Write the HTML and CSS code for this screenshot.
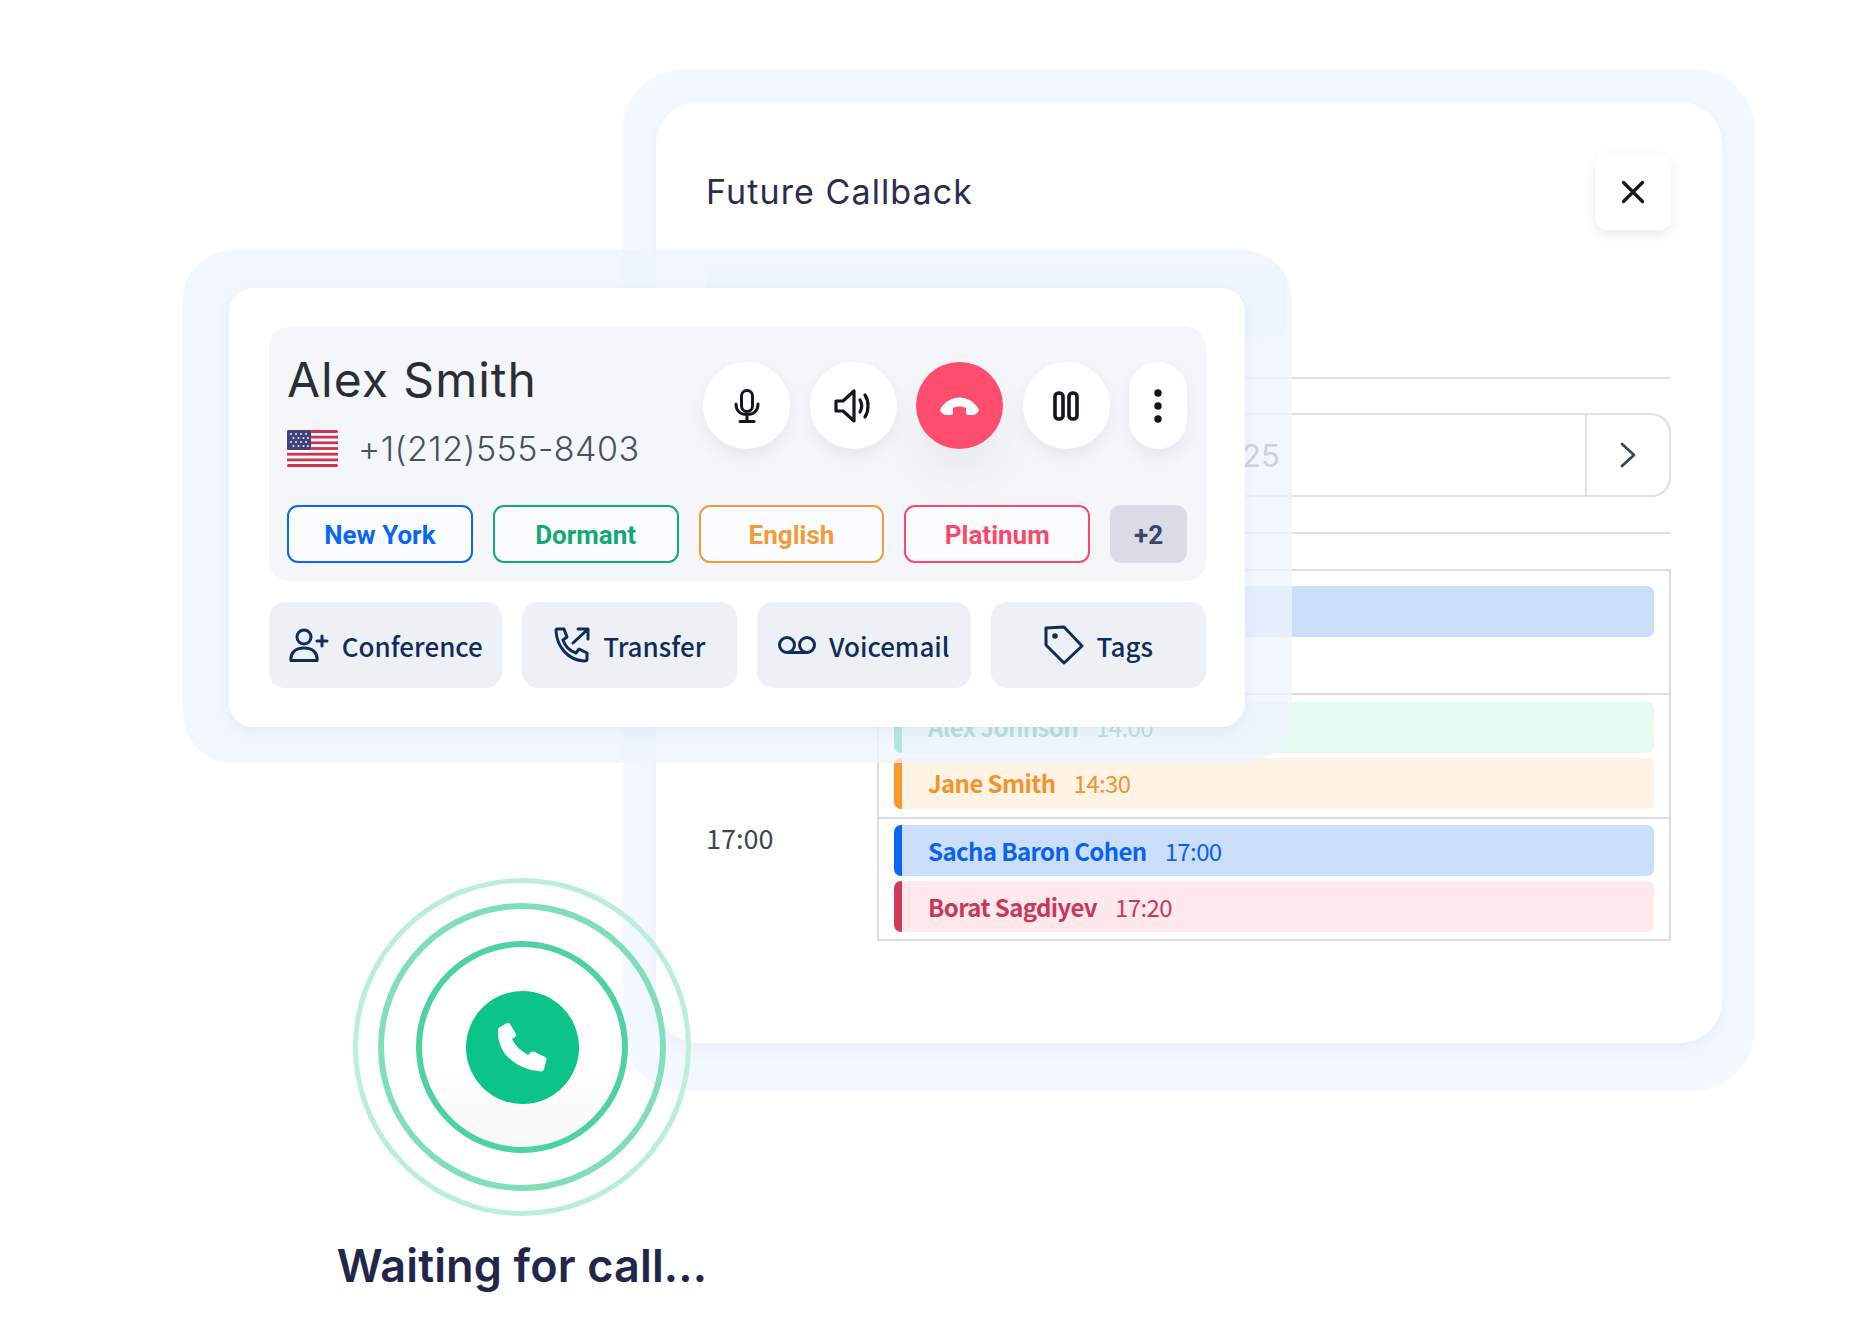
FILE: index.html
```html
<!DOCTYPE html>
<html lang="en">
<head>
    <meta charset="UTF-8">
    <meta name="viewport" content="width=device-width, initial-scale=1.0">
    <title>Call Panel</title>
    <link rel="stylesheet" href="styles.css">
</head>
<body>
    <div class="stage">

        <!-- back window: callback calendar -->
        <div class="halo back-halo">
            <div class="back-card">
                <div class="back-head">
                    <h2 class="back-title">Future Callback</h2>
                    <button class="close-btn">
                        <svg width="24" height="24" viewBox="0 0 24 24" fill="none" stroke="#14161c" stroke-width="3.2" stroke-linecap="round"><path d="M2.500 2.500l19 19M21.500 2.500l-19 19"/></svg>
                    </button>
                </div>
                <div class="tabs-ghost"></div>
                <hr class="rule rule-first">
                <div class="date-bar">
                    <div class="date-text">25</div>
                    <div class="date-next">
                        <svg width="18" height="28" viewBox="0 0 18 28" fill="none" stroke="#3f4755" stroke-width="2.8" stroke-linecap="round" stroke-linejoin="round"><path d="M3 3l12 11L3 25"/></svg>
                    </div>
                </div>
                <hr class="rule rule-second">
                <div class="cal">
                    <div class="cal-time"></div>
                    <div class="cal-slot slot-a">
                        <div class="event ev-blue"></div>
                    </div>
                    <div class="cal-time"></div>
                    <div class="cal-slot slot-b">
                        <div class="event ev-green"><b>Alex Johnson</b><span>14:00</span></div>
                        <div class="event ev-orange"><b>Jane Smith</b><span>14:30</span></div>
                    </div>
                    <div class="cal-time">17:00</div>
                    <div class="cal-slot slot-c">
                        <div class="event ev-blue"><b>Sacha Baron Cohen</b><span>17:00</span></div>
                        <div class="event ev-red"><b>Borat Sagdiyev</b><span>17:20</span></div>
                    </div>
                </div>
            </div>
        </div>

        <!-- waiting rings -->
        <div class="waiting">
            <div class="ring ring-3">
                <div class="ring ring-2">
                    <div class="ring ring-1">
                        <div class="call-dot">
                            <svg width="50" height="50" viewBox="0 0 50 50" fill="#fff"><path d="M3 5L10 1Q12 0 13 2L19 12Q20 14 18 15L15 17Q19 26 31 33L34 30Q36 29 38 30L48 35Q50 36 49.500 38L47 47Q46.500 49.500 44 49.500Q22 48 8 32Q0 20 1 8Q1 6 3 5Z"/></svg>
                        </div>
                    </div>
                </div>
            </div>
            <div class="waiting-text">Waiting for call...</div>
        </div>

        <!-- front window: active call -->
        <div class="halo front-halo">
            <div class="front-card">
                <div class="call-box">
                    <div class="call-top">
                        <div class="caller">
                            <div class="caller-name">Alex Smith</div>
                            <div class="caller-phone">
                                <svg class="flag" width="51" height="37" viewBox="0 0 51 37">
                                    <rect width="51" height="37" rx="3" fill="#fff"/>
                                    <g fill="#d0334f">
                                        <rect width="51" height="3" rx="1.500"/>
                                        <rect y="5.700" width="51" height="2.800"/>
                                        <rect y="11.400" width="51" height="2.800"/>
                                        <rect y="17.100" width="51" height="2.800"/>
                                        <rect y="22.800" width="51" height="2.800"/>
                                        <rect y="28.500" width="51" height="2.800"/>
                                        <rect y="34" width="51" height="3" rx="1.500"/>
                                    </g>
                                    <rect width="24" height="20" rx="2" fill="#3f4379"/>
                                    <g fill="#dfe2f2">
                                        <circle cx="4" cy="4" r="1.100"/><circle cx="9" cy="4" r="1.100"/><circle cx="14" cy="4" r="1.100"/><circle cx="19" cy="4" r="1.100"/>
                                        <circle cx="6.500" cy="8" r="1.100"/><circle cx="11.500" cy="8" r="1.100"/><circle cx="16.500" cy="8" r="1.100"/><circle cx="21" cy="8" r="1.100"/>
                                        <circle cx="4" cy="12" r="1.100"/><circle cx="9" cy="12" r="1.100"/><circle cx="14" cy="12" r="1.100"/><circle cx="19" cy="12" r="1.100"/>
                                        <circle cx="6.500" cy="16" r="1.100"/><circle cx="11.500" cy="16" r="1.100"/><circle cx="16.500" cy="16" r="1.100"/><circle cx="21" cy="16" r="1.100"/>
                                    </g>
                                </svg>
                                <span>+1(212)555-8403</span>
                            </div>
                        </div>
                        <div class="controls">
                            <button class="ctl">
                                <svg width="26" height="34" viewBox="0 0 26 34" fill="none" stroke="#14161c" stroke-width="3" stroke-linecap="round"><rect x="7.500" y="1.500" width="11" height="21" rx="5.500"/><path d="M2 15c0 7 4.500 10.500 11 10.500S24 22 24 15M13 26v6M6 32.500h14"/></svg>
                            </button>
                            <button class="ctl">
                                <svg width="38" height="34" viewBox="0 0 38 34" fill="none" stroke="#14161c" stroke-width="3.200" stroke-linecap="round" stroke-linejoin="round"><path d="M2 12h7L20 2v30L9 22H2z"/><path d="M26 11c2 3.500 2 8.500 0 12M31 6c4 6 4 16 0 22"/></svg>
                            </button>
                            <button class="ctl ctl-end">
                                <svg width="39" height="18" viewBox="0 0 39 18" fill="#fff"><path d="M1 11C10-3 29-3 38 11Q39.500 13 38 15L36 17Q35 18 33 18L28 18Q26 18 26 16L26 11C22 9 17 9 13 11L13 16Q13 18 11 18L6 18Q4 18 3 17L1 15Q-.5 13 1 11Z"/></svg>
                            </button>
                            <button class="ctl">
                                <svg width="26" height="30" viewBox="0 0 26 30" fill="none" stroke="#14161c" stroke-width="3.600"><rect x="2" y="2" width="8" height="26" rx="3.500"/><rect x="16" y="2" width="8" height="26" rx="3.500"/></svg>
                            </button>
                            <button class="ctl ctl-more">
                                <svg width="8" height="34" viewBox="0 0 8 34" fill="#14161c"><circle cx="4" cy="4" r="3.700"/><circle cx="4" cy="17" r="3.700"/><circle cx="4" cy="30" r="3.700"/></svg>
                            </button>
                        </div>
                    </div>
                    <div class="pills">
                        <div class="pill pill-blue">New York</div>
                        <div class="pill pill-green">Dormant</div>
                        <div class="pill pill-orange">English</div>
                        <div class="pill pill-pink">Platinum</div>
                        <div class="pill pill-more">+2</div>
                    </div>
                </div>
                <div class="actions">
                    <button class="action act-conf">
                        <svg width="40" height="34" viewBox="0 0 40 34" fill="none" stroke="#0f2c5a" stroke-width="3" stroke-linecap="round" stroke-linejoin="round"><circle cx="15" cy="9" r="7"/><path d="M2 32.500c-1-7 4-12.500 13-12.500s14 5.500 13 12.500zM33 8v10M28 13h10"/></svg>
                        Conference
                    </button>
                    <button class="action act-transfer">
                        <svg width="36" height="36" viewBox="0 0 36 36" fill="none" stroke="#0f2c5a" stroke-width="3" stroke-linecap="round" stroke-linejoin="round"><path d="M3 2L10 2 13 10 9 13C11 19 16 24 22 26L25 22 33 26 33 32Q33 34 30 34C14 33 3 20 2 4Q2 2 3 2ZM19 16L33 3M24 2L34 2 34 12"/></svg>
                        Transfer
                    </button>
                    <button class="action act-voice">
                        <svg width="38" height="18" viewBox="0 0 38 18" fill="none" stroke="#0f2c5a" stroke-width="3"><circle cx="9" cy="9" r="7.500"/><circle cx="29" cy="9" r="7.500"/><path d="M9 16.500h20"/></svg>
                        Voicemail
                    </button>
                    <button class="action act-tags">
                        <svg width="40" height="40" viewBox="0 0 40 40" fill="none" stroke="#0f2c5a" stroke-width="3" stroke-linejoin="round"><path d="M2 3L20 2 38 21 20 38 2 20Z"/><circle cx="11" cy="11" r="2.800" fill="#0f2c5a" stroke="none"/></svg>
                        Tags
                    </button>
                </div>
            </div>
        </div>

    </div>
</body>
</html>
```

FILE: styles.css
```css
* { box-sizing: border-box; }
body { margin: 0; background: #fff; font-family: "Inter", sans-serif; }
button { font: inherit; border: none; cursor: pointer; padding: 0; }
svg { display: block; flex: none; }

.stage { position: relative; width: 1850px; height: 1337px; overflow: hidden; }

.halo { position: absolute; }

/* back window */
.back-halo { left: 623px; top: 70px; width: 1131px; height: 1020px; padding: 32px 32px 47px 33px; background: #f3f7fe; border-radius: 60px; box-shadow: 0 0 4px #f3f7fe; }
.back-card { height: 941px; padding: 51px 51px 0 50px; background: #fff; border-radius: 42px; box-shadow: 0 6px 14px rgba(120, 140, 190, .08); }
.back-head { display: flex; justify-content: space-between; align-items: center; height: 77px; }
.back-title { margin: 0; font-size: 34px; font-weight: 400; letter-spacing: 1.1px; color: #2a2d4f; }
.close-btn { width: 76px; height: 77px; display: flex; align-items: center; justify-content: center; background: #fff; border-radius: 12px; box-shadow: 0 4px 12px rgba(70, 80, 110, .12); }
.tabs-ghost { width: 580px; height: 72px; margin: 35px 0 0 0; background: #f3f6fc; border-radius: 14px; }
.rule { margin: 0; border: none; border-top: 2px solid #dfe1ea; }
.rule-first { margin-top: 40px; }
.date-bar { display: flex; height: 84px; margin-top: 34px; border: 2px solid #dfe1ea; border-radius: 20px; }
.date-text { flex: 1; padding-left: 534px; font-size: 31px; font-weight: 400; line-height: 82px; color: #5f6777; }
.date-next { width: 84px; display: flex; align-items: center; justify-content: center; border-left: 2px solid #dfe1ea; }
.rule-second { margin-top: 35px; }

.cal { display: grid; grid-template-columns: 171px 1fr; margin-top: 35px; font-family: "Noto Sans CJK JP", sans-serif; font-size: 24px; letter-spacing: -.6px; }
.cal-time { padding-top: 1px; font-size: 27px; letter-spacing: 0; color: #3d4654; line-height: 40px; }
.cal-slot { display: flex; flex-direction: column; gap: 5px; padding: 15px 15px 7px 15px; border: 2px solid #dbdde5; border-bottom: none; }
.slot-a { height: 124px; }
.slot-b { height: 124px; padding-top: 7px; }
.slot-c { height: 124px; padding-top: 6px; border-bottom: 2px solid #dbdde5; }
.event { display: flex; align-items: center; gap: 18px; height: 51px; padding-left: 26px; border-left: 8px solid; border-radius: 7px; flex: none; }
.event b { font-weight: 700; }
.event span { font-weight: 400; }
.slot-b .event { padding-bottom: 3px; }
.ev-blue { background: #cbdffb; border-color: #0a66f5; color: #0a62f2; }
.ev-green { background: #e6faf0; border-color: #10b981; color: #0f9f78; }
.ev-orange { background: #fff3e6; border-color: #f8982d; color: #f3932b; }
.ev-red { background: #ffe9ed; border-color: #d13a5a; color: #c9385a; }

/* rings */
.waiting { position: absolute; left: 322px; top: 878px; width: 400px; display: flex; flex-direction: column; align-items: center; }
.ring { display: flex; align-items: center; justify-content: center; border-radius: 50%; border-style: solid; flex: none; }
.ring-3 { width: 338px; height: 338px; border-width: 5px; border-color: #bdeedd; }
.ring-2 { width: 288px; height: 288px; border-width: 6px; border-color: #80deba; }
.ring-1 { width: 212px; height: 212px; border-width: 6px; border-color: #4fd2a2; background: linear-gradient(#fff 55%, #f8f8f9); }
.call-dot { width: 113px; height: 113px; display: flex; align-items: center; justify-content: center; background: #0cc488; border-radius: 50%; }
.waiting-text { margin-top: 22px; font-size: 45px; font-weight: 600; letter-spacing: .15px; white-space: nowrap; color: #22264a; }

/* front window */
.front-halo { left: 183px; top: 250px; width: 1109px; height: 513px; padding: 38px 47px 36px 46px; background: rgba(238, 244, 254, .75); border-radius: 50px; }
.front-card { height: 439px; padding: 39px 39px 39px 40px; background: #fff; border-radius: 24px; box-shadow: 0 4px 14px rgba(120, 140, 190, .1); }
.call-box { height: 254px; padding: 26px 19px 18px 18px; background: #f5f6fa; border-radius: 20px; }
.call-top { display: flex; justify-content: space-between; height: 152px; }
.caller-name { font-size: 48px; font-weight: 400; letter-spacing: 1px; line-height: 54px; color: #2b2f33; }
.caller-phone { display: flex; align-items: center; gap: 20px; margin-top: 21px; font-size: 34px; font-weight: 300; letter-spacing: .5px; color: #47525f; }
.controls { display: flex; gap: 19.5px; margin-top: 9px; }
.ctl { width: 87px; height: 87px; display: flex; align-items: center; justify-content: center; background: #fff; border-radius: 50%; box-shadow: 0 8px 16px rgba(40, 50, 80, .07); }
.ctl-end { background: #ff4d6d; box-shadow: 0 26px 40px rgba(40, 50, 80, .06); }
.ctl-more { width: 58px; border-radius: 29px; }
.pills { display: flex; gap: 20px; }
.pill { display: flex; align-items: center; justify-content: center; width: 186px; height: 58px; padding-top: 1px; border: 2.5px solid; border-radius: 11px; background: #fbfcfe; font-family: "Roboto", sans-serif; font-size: 26px; font-weight: 700; }
.pill-blue { color: #0a66f5; border-color: #0a66f5; }
.pill-green { color: #12a974; border-color: #12a974; }
.pill-orange { color: #f39a3a; border-color: #f39a3a; }
.pill-pink { color: #f6496b; border-color: #f6496b; }
.pill-more { width: 77px; background: #d9dce6; border: none; color: #3a4468; }

.actions { display: flex; gap: 20px; margin-top: 21px; }
.action { display: flex; align-items: center; justify-content: center; gap: 13px; height: 86px; background: #edf1f6; border-radius: 16px; font-family: "Noto Sans CJK JP", sans-serif; font-size: 26px; font-weight: 500; color: #0f2c5a; }
.act-conf { width: 234px; }
.act-transfer { width: 215px; }
.act-voice { width: 214px; }
.act-tags { width: 216px; }
```
